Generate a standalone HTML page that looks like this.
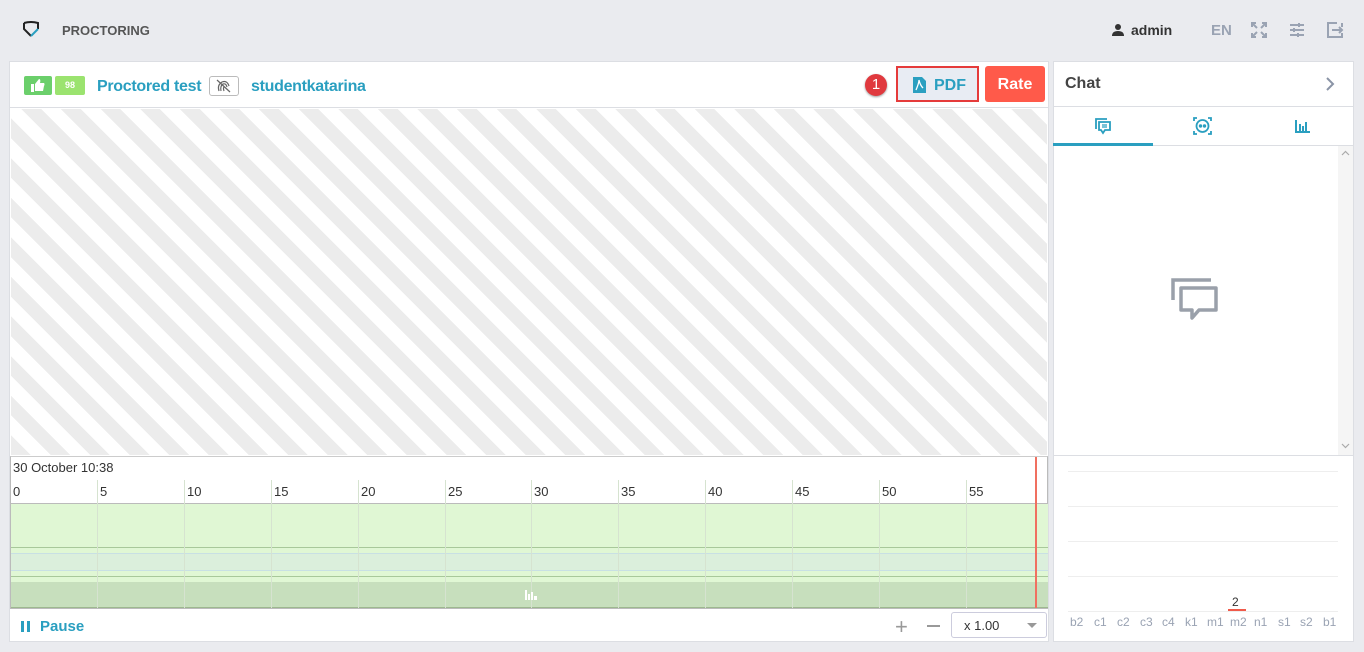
<!DOCTYPE html>
<html><head><meta charset="utf-8"><style>
*{box-sizing:border-box;margin:0;padding:0}
body{width:1364px;height:652px;background:#eaebef;font-family:"Liberation Sans",Arial,sans-serif;position:relative;overflow:hidden;color:#333}
.abs{position:absolute}
.teal{color:#2a9fc0}
</style></head><body>
<svg class="abs" style="left:22px;top:21px" width="18" height="18" viewBox="0 0 18 18"><path d="M2 2 Q9 0 16 2 L16 8" fill="none" stroke="#222" stroke-width="2"/><path d="M2 2 L2 8 L9 15" fill="none" stroke="#222" stroke-width="2"/><path d="M9 15 L16 8" fill="none" stroke="#2a9fc0" stroke-width="2"/></svg>
<div class="abs" style="left:62px;top:23px;font-size:13px;font-weight:bold;color:#555">PROCTORING</div>
<svg class="abs" style="left:1111px;top:23px" width="14" height="14" viewBox="0 0 14 14"><circle cx="7" cy="4" r="3" fill="#333"/><path d="M1 13 Q1 8 7 8 Q13 8 13 13Z" fill="#333"/></svg>
<div class="abs" style="left:1131px;top:22px;font-size:14px;font-weight:bold;color:#333">admin</div>
<div class="abs" style="left:1211px;top:22px;font-size:15px;font-weight:bold;color:#9aa3b3">EN</div>
<svg class="abs" style="left:1251px;top:22px" width="16" height="16" viewBox="0 0 16 16" fill="none" stroke="#9aa3b3" stroke-width="2"><path d="M1 5V1h4M11 1h4v4M15 11v4h-4M5 15H1v-4M2 2l4 4M14 2l-4 4M14 14l-4-4M2 14l4-4"/></svg>
<svg class="abs" style="left:1289px;top:22px" width="16" height="16" viewBox="0 0 16 16" stroke="#9aa3b3" stroke-width="2"><path d="M1 3h14M1 8h14M1 13h14"/><path d="M10 1v4M5 6v4M9 11v4" stroke-width="2"/></svg>
<svg class="abs" style="left:1327px;top:22px" width="17" height="16" viewBox="0 0 17 16" fill="none" stroke="#9aa3b3" stroke-width="2"><path d="M10 1H1v14h14v-4M15 5V1"/><path d="M5 8h10M12 5l3 3-3 3"/></svg>

<div class="abs" style="left:9px;top:61px;width:1040px;height:581px;background:#fff;border:1px solid #dcdee3"></div>
<div class="abs" style="left:24px;top:76px;width:28px;height:19px;background:#6bcf6b;border-radius:2px"></div>
<svg class="abs" style="left:31px;top:79px" width="14" height="13" viewBox="0 0 14 13" fill="#fff"><rect x="0" y="5" width="3" height="8"/><path d="M4 5 L8 0 Q10 0 9 4 H13 Q14 5 13 7 L12 12 H4Z"/></svg>
<div class="abs" style="left:55px;top:76px;width:30px;height:19px;background:#9be36f;border-radius:2px;color:#fff;font-size:9px;font-weight:bold;text-align:center;line-height:19px">98</div>
<div class="abs teal" style="left:97px;top:78px;font-size:16px;font-weight:bold;letter-spacing:-0.3px">Proctored test</div>
<div class="abs" style="left:209px;top:76px;width:30px;height:20px;border:1px solid #bbb;border-radius:3px"></div>
<svg class="abs" style="left:216px;top:79px" width="15" height="14" viewBox="0 0 15 14" fill="none" stroke="#666" stroke-width="1.2"><path d="M3 12Q1 6 6 3Q11 1 13 7M5 12Q4 7 7 5Q10 4 11 8M8 12Q7 9 8 8M1 1l13 12"/></svg>
<div class="abs teal" style="left:251px;top:78px;font-size:16px;font-weight:bold;letter-spacing:-0.3px">studentkatarina</div>
<div class="abs" style="left:865px;top:74px;width:22px;height:22px;border-radius:50%;background:#e0393e;color:#fff;font-size:15px;text-align:center;line-height:22px;box-shadow:0 1px 2px rgba(0,0,0,.4)">1</div>
<div class="abs" style="left:896px;top:66px;width:83px;height:36px;border:2px solid #e53b3b;background:#e8ecf3"></div>
<svg class="abs" style="left:913px;top:77px" width="13" height="16" viewBox="0 0 13 16"><path d="M0 0h9l4 4v12H0Z" fill="#2a9fc0"/><path d="M3 13 Q6 6 6 3 Q7 8 10 11" fill="none" stroke="#fff" stroke-width="1.3"/></svg>
<div class="abs teal" style="left:934px;top:77px;font-size:16px;font-weight:bold">PDF</div>
<div class="abs" style="left:985px;top:66px;width:60px;height:36px;background:#ff5a4a;border-radius:3px;color:#fff;font-size:16px;font-weight:bold;text-align:center;line-height:38px">Rate</div>
<div class="abs" style="left:10px;top:107px;width:1038px;height:1px;background:#dcdee3"></div>
<div class="abs" style="left:11px;top:109px;width:1036px;height:346px;background:repeating-linear-gradient(45deg,#ececec 0 14px,#fff 14px 28px)"></div>

<div class="abs" style="left:10px;top:456px;width:1038px;height:153px;border:1px solid #bbb;border-top:1px solid #ccc;background:#fff"></div>
<div class="abs" style="left:13px;top:460px;font-size:13px;color:#333">30 October 10:38</div>
<div class="abs" style="left:11px;top:503px;width:1037px;height:105px;background:#e0f7d4;border-top:1px solid #bbb"></div>
<div class="abs" style="left:11px;top:547px;width:1037px;height:1px;background:#a8c89a"></div>
<div class="abs" style="left:11px;top:553px;width:1037px;height:18px;background:#dbefdc;border-top:1px solid #c8e0e4;border-bottom:1px solid #c8e0e4"></div>
<div class="abs" style="left:11px;top:576px;width:1037px;height:1px;background:#a8c89a"></div>
<div class="abs" style="left:11px;top:582px;width:1037px;height:26px;background:#c7dfbd;border-bottom:1px solid #9db88f"></div>
<div id="ticks"></div>
<svg class="abs" style="left:525px;top:590px" width="12" height="10" viewBox="0 0 12 10" fill="#fff"><rect x="0" y="0" width="2" height="10"/><rect x="3" y="4" width="2" height="6"/><rect x="6" y="2" width="2" height="8"/><rect x="9" y="6" width="3" height="4"/></svg>
<div class="abs" style="left:1035px;top:457px;width:2px;height:151px;background:#f07060"></div>

<svg class="abs" style="left:20px;top:620px" width="12" height="12"><rect x="1" y="1" width="3" height="11" fill="#2a9fc0"/><rect x="7" y="1" width="3" height="11" fill="#2a9fc0"/></svg>
<div class="abs teal" style="left:40px;top:618px;font-size:15px;font-weight:bold">Pause</div>
<div class="abs" style="left:895px;top:614px;font-size:22px;color:#999">+</div>
<div class="abs" style="left:927px;top:625px;width:13px;height:2px;background:#999"></div>
<div class="abs" style="left:951px;top:612px;width:96px;height:26px;border:1px solid #ccd;border-radius:3px;font-size:13px;color:#333;padding:5px 0 0 12px">x 1.00</div>
<div class="abs" style="left:1027px;top:623px;border-left:5px solid transparent;border-right:5px solid transparent;border-top:5px solid #999"></div>

<div class="abs" style="left:1053px;top:61px;width:301px;height:581px;background:#fff;border:1px solid #dcdee3"></div>
<div class="abs" style="left:1065px;top:75px;font-size:16px;font-weight:bold;color:#444">Chat</div>
<svg class="abs" style="left:1325px;top:77px" width="10" height="14" fill="none" stroke="#8a94a6" stroke-width="2"><path d="M2 1l6 6-6 6"/></svg>
<div class="abs" style="left:1054px;top:106px;width:299px;height:1px;background:#dcdee3"></div>
<div class="abs" style="left:1054px;top:145px;width:299px;height:1px;background:#dcdee3"></div>
<div class="abs" style="left:1053px;top:143px;width:100px;height:3px;background:#2a9fc0"></div>
<svg class="abs" style="left:1095px;top:118px" width="16" height="17" viewBox="0 0 16 17" fill="none" stroke="#2a9fc0" stroke-width="1.8"><path d="M1 11V1h11"/><path d="M4 4h11v8h-5l-2 3-2-3H4Z"/><path d="M7 7h5M7 9h5" stroke-width="1.2"/></svg>
<svg class="abs" style="left:1193px;top:117px" width="19" height="18" viewBox="0 0 19 18" fill="none" stroke="#2a9fc0" stroke-width="1.8"><path d="M1 4V1h3M15 1h3v3M18 14v3h-3M4 17H1v-3"/><circle cx="9.5" cy="9" r="6"/><circle cx="7.5" cy="9" r="0.8" fill="#2a9fc0"/><circle cx="11.5" cy="9" r="0.8" fill="#2a9fc0"/></svg>
<svg class="abs" style="left:1295px;top:120px" width="15" height="13" viewBox="0 0 15 13" fill="#2a9fc0"><rect x="0" y="0" width="2" height="13"/><rect x="0" y="11" width="15" height="2"/><rect x="4" y="4" width="2" height="8"/><rect x="7" y="6" width="2" height="6"/><rect x="10" y="2" width="2" height="10"/></svg>
<div class="abs" style="left:1338px;top:146px;width:15px;height:309px;background:#f5f5f5"></div>
<svg class="abs" style="left:1341px;top:150px" width="9" height="6" fill="none" stroke="#aaa" stroke-width="1.2"><path d="M1 5l3.5-3.5L8 5"/></svg>
<svg class="abs" style="left:1341px;top:443px" width="9" height="6" fill="none" stroke="#aaa" stroke-width="1.2"><path d="M1 1l3.5 3.5L8 1"/></svg>
<svg class="abs" style="left:1170px;top:276px" width="50" height="48" viewBox="0 0 50 48" fill="none" stroke="#9aa0aa" stroke-width="3.5"><path d="M3 24V4h38"/><path d="M11 12h35v22H29l-7 8v-8H11Z" stroke-linejoin="round"/></svg>
<div class="abs" style="left:1054px;top:455px;width:299px;height:1px;background:#dcdee3"></div>
<div class="abs" style="left:1068px;top:471px;width:270px;height:1px;background:#eee"></div>
<div class="abs" style="left:1068px;top:506px;width:270px;height:1px;background:#eee"></div>
<div class="abs" style="left:1068px;top:541px;width:270px;height:1px;background:#eee"></div>
<div class="abs" style="left:1068px;top:576px;width:270px;height:1px;background:#eee"></div>
<div class="abs" style="left:1068px;top:611px;width:270px;height:1px;background:#eee"></div>
<div class="abs" style="left:1232px;top:595px;font-size:12px;color:#333">2</div>
<div class="abs" style="left:1228px;top:609px;width:18px;height:2px;background:#f05a4a"></div>
<div class="abs" style="left:1070px;top:615px;font-size:12px;color:#9aa3b3">
<span style="position:absolute;left:0">b2</span><span style="position:absolute;left:24px">c1</span><span style="position:absolute;left:47px">c2</span><span style="position:absolute;left:70px">c3</span><span style="position:absolute;left:92px">c4</span><span style="position:absolute;left:115px">k1</span><span style="position:absolute;left:137px">m1</span><span style="position:absolute;left:160px">m2</span><span style="position:absolute;left:184px">n1</span><span style="position:absolute;left:208px">s1</span><span style="position:absolute;left:230px">s2</span><span style="position:absolute;left:253px">b1</span></div>
<script>
var h='';for(var i=0;i<12;i++){var x=Math.round(10+i*86.9);
h+='<div class="abs" style="left:'+x+'px;top:480px;width:1px;height:128px;background:'+(i?'#d6e3d0':'transparent')+'"></div>';
h+='<div class="abs" style="left:'+(x+3)+'px;top:484px;font-size:13px;color:#333">'+(i*5)+'</div>';}
document.getElementById('ticks').innerHTML=h;
</script>
</body></html>
